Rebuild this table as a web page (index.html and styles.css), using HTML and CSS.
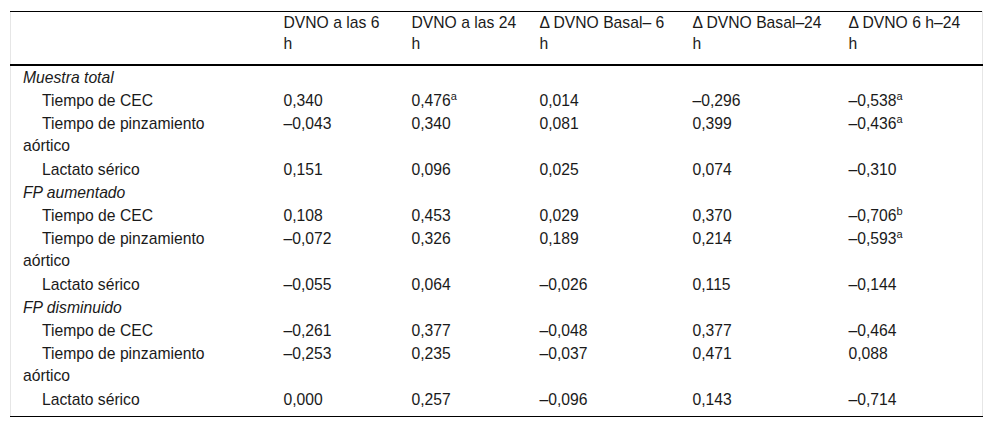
FILE: index.html
```html
<!DOCTYPE html>
<html lang="es">
<head>
<meta charset="utf-8">
<title>Tabla</title>
<link rel="stylesheet" href="styles.css">
</head>
<body>
<div class="wrap">
<table class="tbl">
<colgroup>
<col class="c1"><col class="c2"><col class="c3"><col class="c4"><col class="c5"><col class="c6">
</colgroup>
<thead>
<tr><th></th><th>DVNO a las 6 h</th><th>DVNO a las 24 h</th><th>Δ DVNO Basal– 6 h</th><th>Δ DVNO Basal–24 h</th><th class="last">Δ DVNO 6 h–24 h</th></tr>
</thead>
<tbody>
<tr><td class="grp">Muestra total</td><td></td><td></td><td></td><td></td><td></td></tr>
<tr><td class="sub">Tiempo de CEC</td><td>0,340</td><td>0,476<sup>a</sup></td><td>0,014</td><td>–0,296</td><td>–0,538<sup>a</sup></td></tr>
<tr><td class="sub">Tiempo de pinzamiento aórtico</td><td>–0,043</td><td>0,340</td><td>0,081</td><td>0,399</td><td>–0,436<sup>a</sup></td></tr>
<tr><td class="sub">Lactato sérico</td><td>0,151</td><td>0,096</td><td>0,025</td><td>0,074</td><td>–0,310</td></tr>
<tr><td class="grp">FP aumentado</td><td></td><td></td><td></td><td></td><td></td></tr>
<tr><td class="sub">Tiempo de CEC</td><td>0,108</td><td>0,453</td><td>0,029</td><td>0,370</td><td>–0,706<sup>b</sup></td></tr>
<tr><td class="sub">Tiempo de pinzamiento aórtico</td><td>–0,072</td><td>0,326</td><td>0,189</td><td>0,214</td><td>–0,593<sup>a</sup></td></tr>
<tr><td class="sub">Lactato sérico</td><td>–0,055</td><td>0,064</td><td>–0,026</td><td>0,115</td><td>–0,144</td></tr>
<tr><td class="grp">FP disminuido</td><td></td><td></td><td></td><td></td><td></td></tr>
<tr><td class="sub">Tiempo de CEC</td><td>–0,261</td><td>0,377</td><td>–0,048</td><td>0,377</td><td>–0,464</td></tr>
<tr><td class="sub">Tiempo de pinzamiento aórtico</td><td>–0,253</td><td>0,235</td><td>–0,037</td><td>0,471</td><td>0,088</td></tr>
<tr class="end"><td class="sub">Lactato sérico</td><td>0,000</td><td>0,257</td><td>–0,096</td><td>0,143</td><td>–0,714</td></tr>
</tbody>
</table>
</div>
</body>
</html>
```

FILE: styles.css
```css
html, body {
  margin: 0;
  padding: 0;
  background: #fff;
}
body {
  font-family: "Liberation Sans", Arial, sans-serif;
  font-size: 15.7px;
  color: #1a1a1a;
}
.wrap {
  padding: 11px 10px 0 10px;
}
.tbl {
  width: 972px;
  table-layout: fixed;
  border-collapse: collapse;
  border-top: 1px solid #000;
  border-bottom: 1px solid #000;
  border-left: 1px solid #e6e6e6;
  border-right: 1px solid #e6e6e6;
}
.c1 { width: 261px; }
.c2 { width: 128px; }
.c3 { width: 128px; }
.c4 { width: 153px; }
.c5 { width: 156px; }
.c6 { width: 146px; }
.tbl th {
  font-weight: normal;
  text-align: left;
  vertical-align: top;
  line-height: 21px;
  padding: 0 8px 10px 12px;
  border-bottom: 2px solid #000;
}
.tbl th.last {
  padding-right: 17px;
}
.tbl td {
  vertical-align: top;
  line-height: 22px;
  padding: 0.75px 8px 0.5px 12px;
}
.tbl tr.end td {
  padding-bottom: 5.5px;
}
.tbl td.grp {
  font-style: italic;
}
.tbl td.sub {
  text-indent: 19px;
  padding-right: 40px;
}
.tbl sup {
  font-size: 11px;
  line-height: 0;
  vertical-align: 6px;
}
```
